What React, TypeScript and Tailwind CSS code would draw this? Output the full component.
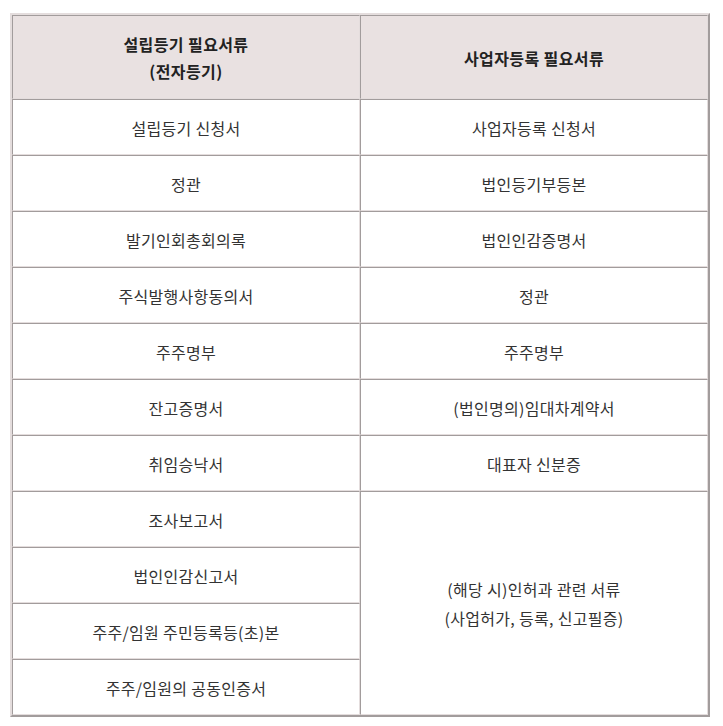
const rows: [string, string | null][] = [
  ["설립등기 신청서", "사업자등록 신청서"],
  ["정관", "법인등기부등본"],
  ["발기인회총회의록", "법인인감증명서"],
  ["주식발행사항동의서", "정관"],
  ["주주명부", "주주명부"],
  ["잔고증명서", "(법인명의)임대차계약서"],
  ["취임승낙서", "대표자 신분증"],
  ["조사보고서", null],
  ["법인인감신고서", null],
  ["주주/임원 주민등록등(초)본", null],
  ["주주/임원의 공동인증서", null],
];

const cell =
  "border-t border-l border-t-[#a29c9c] border-l-[#a29c9c] border-b border-r border-b-[#e4dddd] border-r-[#e4dddd] text-center align-middle px-0 pb-0 pt-[2px]";

export default function App() {
  return (
    <div
      className="bg-white w-[723px] h-[726px] pt-[13px] pl-[10px]"
      style={{ fontFamily: '"Noto Sans CJK KR", "Noto Sans", sans-serif' }}
    >
      <table className="border-separate border-spacing-0 w-[700px] border-2 border-t-[#e4dddd] border-l-[#e4dddd] border-b-[#a29c9c] border-r-[#a29c9c] text-[16px] tracking-[0.3px] text-[#333]">
        <thead>
          <tr>
            <th
              className={`${cell} h-[84px] w-[348px] bg-[#e9e1e1] font-bold leading-[27px] text-[#222] tracking-[0.4px]`}
            >
              설립등기 필요서류
              <br />
              (전자등기)
            </th>
            <th
              className={`${cell} h-[84px] w-[348px] bg-[#e9e1e1] font-bold text-[#222] tracking-[0.4px]`}
            >
              사업자등록 필요서류
            </th>
          </tr>
        </thead>
        <tbody>
          {rows.map(([left, right], i) => (
            <tr key={i}>
              <td className={`${cell} h-[56px]`}>{left}</td>
              {i < 7 && <td className={`${cell} h-[56px]`}>{right}</td>}
              {i === 7 && (
                <td rowSpan={4} className={`${cell} leading-[29px]`}>
                  (해당 시)인허과 관련 서류
                  <br />
                  (사업허가, 등록, 신고필증)
                </td>
              )}
            </tr>
          ))}
        </tbody>
      </table>
    </div>
  );
}
